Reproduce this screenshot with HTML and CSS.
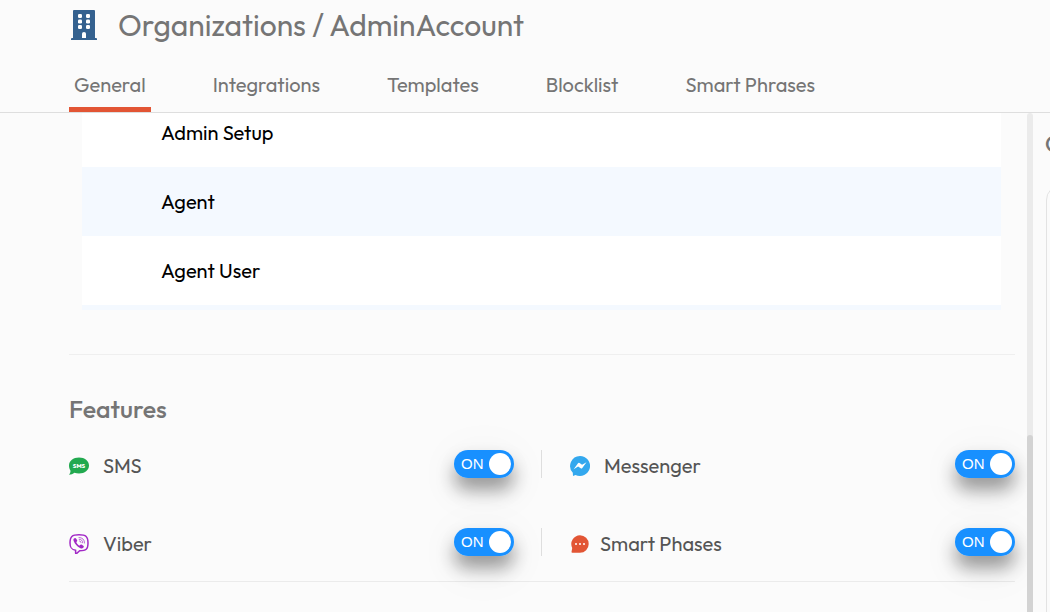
FILE: index.html
```html
<!DOCTYPE html>
<html lang="en">
  <head>
    <meta charset="UTF-8" />
    <meta name="viewport" content="width=device-width, initial-scale=1.0" />
    <title>Organizations / AdminAccount</title>
    <link rel="stylesheet" href="styles.css">
  </head>
  <body>
    <header class="page-header">
      <div class="page-title">
        <svg class="org-icon" viewBox="0 0 26 30" aria-hidden="true">
          <path fill="#34618f" d="M3 0h20a1 1 0 0 1 1 1v27h1a1 1 0 0 1 1 1v1H0v-1a1 1 0 0 1 1-1h1V1a1 1 0 0 1 1-1z" />
          <g fill="#fff">
            <rect x="7" y="4" width="4" height="4" rx="1.300" />
            <rect x="15" y="4" width="4" height="4" rx="1.300" />
            <rect x="7" y="9.500" width="4" height="4" rx="1.300" />
            <rect x="15" y="9.500" width="4" height="4" rx="1.300" />
            <rect x="7" y="15" width="4" height="4" rx="1.300" />
            <rect x="15" y="15" width="4" height="4" rx="1.300" />
            <path d="M11 28v-4.500q0-1.500 2-1.500t2 1.500V28z" />
          </g>
        </svg>
        <h1>Organizations / AdminAccount</h1>
      </div>
      <nav class="tabs">
        <a class="tab active" href="#general">General</a>
        <a class="tab" href="#integrations">Integrations</a>
        <a class="tab" href="#templates">Templates</a>
        <a class="tab" href="#blocklist">Blocklist</a>
        <a class="tab" href="#smart-phrases">Smart Phrases</a>
      </nav>
    </header>
    <div class="main-container">
      <main class="content">
        <div class="table-wrap">
          <table class="roles-table">
            <tbody>
              <tr><td>Admin Setup</td></tr>
              <tr><td>Agent</td></tr>
              <tr><td>Agent User</td></tr>
              <tr><td></td></tr>
            </tbody>
          </table>
        </div>
        <section class="features">
          <h2>Features</h2>
          <div class="feature-grid">
            <div class="feature">
              <svg class="feature-icon" viewBox="0 0 20 20" aria-hidden="true">
                <path fill="#22a94f" d="M10 1.500c5.700 0 10 3.400 10 8s-4.300 8-10 8c-1.700 0-3.200-.3-4.600-.8C4 18 2 18.600 0 18.700c1-1 1.500-2.400 1.500-3.900C.5 13.300 0 11.500 0 9.500c0-4.600 4.300-8 10-8z" />
                <text class="sms-text" x="10" y="12" text-anchor="middle">SMS</text>
              </svg>
              <label for="sms">SMS</label>
              <span class="switch"><input type="checkbox" id="sms" checked /><span>ON</span></span>
            </div>
            <div class="feature">
              <svg class="feature-icon" viewBox="0 0 20 20" aria-hidden="true">
                <path fill="#33a8ee" d="M10 0a10 10 0 1 1-4.500 18.900L3 20l-.2-3.200A10 10 0 0 1 10 0z" />
                <path fill="#fff" d="M3.700 13.200L8 7.200q.7-.9 1.600-.2l2.100 1.600q.4.300.8 0l4-2.300L12.300 12q-.7.900-1.600.3l-2.200-1.600q-.4-.3-.8 0z" />
              </svg>
              <label for="messenger">Messenger</label>
              <span class="switch"><input type="checkbox" id="messenger" checked /><span>ON</span></span>
            </div>
            <div class="feature">
              <svg class="feature-icon" viewBox="0 0 20 20" aria-hidden="true" fill="none" stroke="#a229c6" stroke-linecap="round">
                <path stroke-width="1.500" d="M10 .8c7 0 9 1.700 9 8.200s-2 7.700-8.300 7.800L7.500 19.600c-.5.300-.9.100-.9-.5v-2.800C2.200 15.500 1 13.600 1 9 1 2.500 3 .8 10 .8z" />
                <path fill="#a229c6" stroke="none" d="M5 4.600c1-1 1.600-.8 2.200.1l.8 1.200c.5.800.2 1.300-.5 1.900-.4.400.2 1.400 1.100 2.400s1.900 1.600 2.300 1.100c.6-.7 1.100-1 1.900-.5l1.500 1c.8.600.7 1.200-.1 2-1 1-1.900.8-3.200.1-3-1.500-5.100-4-6.300-7-.4-.9-.4-1.600.3-2.300z" />
                <path stroke-width=".7" d="M10 3.500c3.500.1 5.500 2 5.500 5.500M10.200 5.300c2.300.1 3.400 1.200 3.500 3.500M10.500 7c.9.100 1.400.6 1.500 1.500" />
              </svg>
              <label for="viber">Viber</label>
              <span class="switch"><input type="checkbox" id="viber" checked /><span>ON</span></span>
            </div>
            <div class="feature">
              <svg class="feature-icon narrow" viewBox="0 0 20 20" aria-hidden="true">
                <path fill="#e25534" d="M10 1.300a8.700 8.700 0 1 1 0 17.400H2.300q-.8 0-.8-.8l.7-4A8.700 8.700 0 0 1 10 1.300z" />
                <g fill="#fff">
                  <circle cx="6" cy="10" r="1" />
                  <circle cx="10" cy="10" r="1" />
                  <circle cx="14" cy="10" r="1" />
                </g>
              </svg>
              <label for="smart-phases">Smart Phases</label>
              <span class="switch"><input type="checkbox" id="smart-phases" checked /><span>ON</span></span>
            </div>
          </div>
        </section>
      </main>
      <div class="scroll-track"><div class="scroll-thumb"></div></div>
      <aside class="side-panel">
        <h3>O</h3>
        <div class="side-card"></div>
      </aside>
    </div>
  </body>
</html>
```
FILE: styles.css
```css
* {
  margin: 0;
  padding: 0;
  box-sizing: border-box;
}
body {
  display: flex;
  flex-direction: column;
  height: 100vh;
  overflow: hidden;
  background-color: #fbfbfb;
  color: #757575;
  font-family: "Outfit", "Lato", sans-serif;
  font-size: 20px;
  line-height: 24px;
}
.page-header {
  padding: 6px 0 0 69px;
  border-bottom: 1px solid #dedede;
}
.page-title {
  display: flex;
  align-items: center;
  gap: 21px;
  padding-left: 2px;
}
.org-icon {
  width: 26px;
  height: 30px;
}
.page-title h1 {
  font-size: 30px;
  font-weight: 400;
  line-height: 38px;
}
.tabs {
  display: flex;
  gap: 57px;
  margin-top: 29px;
}
.tab {
  padding: 0 5px 10px;
  border-bottom: 5px solid transparent;
  color: #757575;
  text-decoration: none;
}
.tab.active {
  border-color: #e25534;
}
.main-container {
  display: flex;
  flex: 1;
  min-height: 0;
}
.content {
  flex: 1;
  padding: 0 12px 0 69px;
  overflow: hidden;
}
/* list is scrolled partway through its first row */
.table-wrap {
  height: 197px;
  margin: 0 14px 0 13px;
  overflow: hidden;
}
.roles-table {
  width: 100%;
  margin-top: -15px;
  border-collapse: collapse;
  color: #000;
}
.roles-table td {
  height: 69px;
  padding-left: 79px;
}
.roles-table tr:nth-child(odd) {
  background-color: #fff;
}
.roles-table tr:nth-child(even) {
  background-color: #f4f9ff;
}
.features {
  margin-top: 44px;
  padding: 38px 0 25px;
  border-top: 1px solid #efefef;
  border-bottom: 1px solid #ebebeb;
}
.features h2 {
  margin-bottom: 25px;
  font-size: 25px;
  font-weight: 500;
  line-height: 32px;
}
.feature-grid {
  display: grid;
  grid-template-columns: 1fr 1fr;
  gap: 50px 56px;
}
.feature {
  position: relative;
  display: flex;
  align-items: center;
  height: 28px;
  color: #555;
}
.feature:nth-child(even)::before {
  content: "";
  position: absolute;
  left: -29px;
  width: 1px;
  height: 28px;
  background: #dedede;
}
.feature-icon {
  width: 20px;
  height: 20px;
  margin: 4px 14px 0 0;
}
.feature-icon.narrow {
  margin-right: 10px;
}
.feature label {
  margin-top: 4px;
}
.sms-text {
  fill: #fff;
  font-size: 6px;
  font-weight: 800;
}
.switch {
  display: grid;
  width: 60px;
  height: 28px;
  margin-left: auto;
  border-radius: 14px;
  box-shadow: 0 12px 18px rgba(0, 0, 0, 0.38), 0 10px 50px rgba(0, 0, 0, 0.07);
}
.switch input,
.switch span {
  grid-area: 1 / 1;
}
.switch input {
  appearance: none;
  display: flex;
  align-items: center;
  padding: 3px;
  border-radius: 14px;
  background: #999;
  cursor: pointer;
}
.switch input::before {
  content: "";
  width: 22px;
  height: 22px;
  border-radius: 50%;
  background: #fff;
}
.switch input:checked {
  justify-content: flex-end;
  background: #1890ff;
}
.switch span {
  padding-left: 7px;
  color: #fff;
  font-family: "Liberation Sans", sans-serif;
  font-size: 15px;
  line-height: 28px;
  pointer-events: none;
  z-index: 1;
}
.scroll-track {
  width: 6px;
  border-radius: 3px 3px 0 0;
  background: #ebebeb;
}
.scroll-thumb {
  height: 36%;
  margin-top: 322px;
  border-radius: 3px 3px 0 0;
  background: #d3d3d3;
}
.side-panel {
  width: 17px;
  padding: 19px 0 0 12px;
  overflow: hidden;
}
.side-panel h3 {
  font-size: 22px;
  font-weight: 500;
}
.side-card {
  width: 400px;
  height: 100%;
  margin: 29px 0 0 1px;
  border: 1px solid #e3e3e3;
  border-radius: 15px;
}
```
